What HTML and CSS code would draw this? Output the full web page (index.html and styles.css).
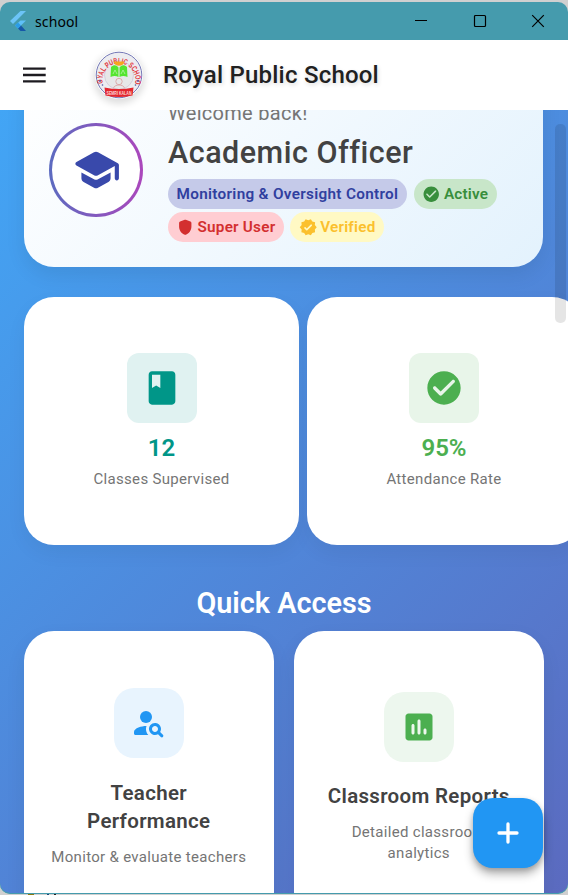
FILE: index.html
```html
<!DOCTYPE html>
<html lang="en">
<head>
<meta charset="utf-8">
<title>school</title>
<link rel="stylesheet" href="styles.css">
</head>
<body>
<div class="window">
  <header class="titlebar">
    <svg class="flutter" viewBox="0 0 18 22"><path fill="#6cc4f7" d="M11.500 1h5.500L4 14 1 11z"/><path fill="#5fc0f8" d="M11.500 10.500H17L12 15.500 9 18.500 6 15.500z"/><path fill="#1657a8" d="M9 18.500l3-3 5 5.500h-5.500z"/><path fill="#2b9de8" d="M6 15.500l3-3 3 3-3 3z"/></svg>
    <span class="app-name">school</span>
    <div class="controls">
      <svg viewBox="0 0 14 14"><path d="M1 6.500h12"/></svg>
      <svg viewBox="0 0 14 14"><rect x="1.500" y="1.500" width="11" height="11" rx="1"/></svg>
      <svg viewBox="0 0 14 14"><path d="M1.200 1.200l11.600 11.600M12.800 1.200L1.200 12.800"/></svg>
    </div>
  </header>

  <nav class="appbar">
    <svg class="menu" viewBox="0 0 24 16"><path d="M0 1.600h22.700M0 8h22.700M0 14.400h22.700"/></svg>
    <div class="crest">
      <svg viewBox="0 0 48 48">
        <defs><path id="arc" d="M8 32.500A16.400 16.400 0 1 1 40 32.500"/></defs>
        <circle cx="24" cy="24" r="22.800" fill="#ececf0" stroke="#7377b5" stroke-width="1"/>
        <circle cx="24" cy="24" r="14.500" fill="#e7e7e8" stroke="#c3b7cd" stroke-width=".5"/>
        <text class="crest-name"><textPath href="#arc" startOffset="50%" text-anchor="middle" textLength="66" lengthAdjust="spacingAndGlyphs">ROYAL PUBLIC SCHOOL</textPath></text>
        <path fill="#f7a51f" d="M18.500 10.500h11c-.7 2.800-2.700 4.300-5.500 4.300s-4.800-1.500-5.500-4.300z"/>
        <path fill="#55e52f" d="M16 16c3-3 6-2 7.500.5V26c-2.500-1.500-5-1.500-8 0zM32 16c-3-3-6-2-7.500.5V26c2.500-1.500 5-1.500 8 0z"/>
        <path fill="none" stroke="#b5f0a5" stroke-width=".8" d="M18 23l2-4 2 4M26 23l2-4 2 4"/>
        <circle cx="24" cy="30.500" r="3.200" fill="none" stroke="#d99c9c" stroke-width=".8"/>
        <path fill="none" stroke="#d99c9c" stroke-width=".8" d="M18.500 37c1-4 10-4 11 0"/>
        <circle cx="5" cy="30" r=".9" fill="#4a50a5"/><circle cx="43" cy="30" r=".9" fill="#4a50a5"/><circle cx="7.500" cy="34" r=".8" fill="#4a50a5"/><circle cx="40.500" cy="34" r=".8" fill="#4a50a5"/>
        <path fill="#e3262e" d="M9.500 36.500q14.500 3 29 0l-1 8q-13.500 3-27 0z"/>
        <text class="crest-place" x="24" y="43.500" text-anchor="middle" textLength="25" lengthAdjust="spacingAndGlyphs">SEMRI KALAN</text>
      </svg>
    </div>
    <h1 class="school-name">Royal Public School</h1>
  </nav>

  <main class="page">
    <section class="hero">
      <div class="avatar">
        <div class="avatar-inner"><svg viewBox="0 0 24 24"><path d="M5 13.180v2.810c0 .73.4 1.410 1.040 1.760l5 2.730c.6.33 1.320.33 1.920 0l5-2.730c.64-.35 1.040-1.030 1.040-1.760v-2.810l-6.040 3.300c-.6.33-1.320.33-1.920 0L5 13.180zm6.040-9.660l-8.430 4.600c-.69.38-.69 1.380 0 1.760l8.430 4.600c.6.33 1.320.33 1.920 0L21 10.090V16c0 .55.45 1 1 1s1-.45 1-1V9.590c0-.37-.2-.7-.52-.88l-9.520-5.190c-.6-.32-1.320-.32-1.920 0z"/></svg></div>
      </div>
      <div class="hero-info">
        <p class="welcome">Welcome back!</p>
        <h2 class="role">Academic Officer</h2>
        <div class="badges">
          <span class="badge indigo">Monitoring &amp; Oversight Control</span>
          <span class="badge green"><svg viewBox="0 0 24 24"><path d="M12 2C6.480 2 2 6.480 2 12s4.480 10 10 10 10-4.480 10-10S17.520 2 12 2zM9.290 16.290L5.700 12.700c-.39-.39-.39-1.020 0-1.410s1.020-.39 1.410 0L10 14.170l6.880-6.880c.39-.39 1.020-.39 1.410 0s.39 1.020 0 1.410l-7.590 7.590c-.38.39-1.020.39-1.410 0z"/></svg>Active</span>
          <span class="badge red"><svg viewBox="0 0 24 24"><path d="M11.300 2.260l-6 2.250C4.520 4.810 4 5.550 4 6.390v4.700c0 4.830 3.130 9.370 7.430 10.750.36.12.78.12 1.140 0C16.870 20.460 20 15.920 20 11.090v-4.700c0-.83-.52-1.580-1.300-1.870l-6-2.250c-.45-.18-.95-.18-1.400-.01z"/></svg>Super User</span>
          <span class="badge yellow"><svg viewBox="0 0 24 24"><path d="M23 12l-2.440-2.790.34-3.690-3.610-.82-1.890-3.200L12 2.960 8.600 1.500 6.710 4.690 3.100 5.500l.34 3.700L1 12l2.440 2.790-.34 3.700 3.610.82L8.600 22.500l3.400-1.470 3.400 1.460 1.890-3.190 3.610-.82-.34-3.690L23 12zM9.380 16.010L7 13.610c-.39-.39-.39-1.020 0-1.410l.07-.07c.39-.39 1.030-.39 1.420 0l1.610 1.620 5.150-5.160c.39-.39 1.030-.39 1.420 0l.07.07c.39.39.39 1.020 0 1.410l-5.920 5.940c-.41.39-1.040.39-1.440 0z"/></svg>Verified</span>
        </div>
      </div>
    </section>

    <section class="stats">
      <article class="stat teal">
        <div class="tile"><svg viewBox="0 0 24 24"><path d="M18 2H6c-1.100 0-2 .9-2 2v16c0 1.100.9 2 2 2h12c1.100 0 2-.9 2-2V4c0-1.100-.9-2-2-2zM6 4h5v8l-2.500-1.500L6 12V4z"/></svg></div>
        <strong>12</strong>
        <p>Classes Supervised</p>
      </article>
      <article class="stat leaf">
        <div class="tile"><svg viewBox="0 0 24 24"><path d="M12 2C6.480 2 2 6.480 2 12s4.480 10 10 10 10-4.480 10-10S17.520 2 12 2zM9.290 16.290L5.700 12.700c-.39-.39-.39-1.020 0-1.410s1.020-.39 1.410 0L10 14.170l6.880-6.880c.39-.39 1.020-.39 1.410 0s.39 1.020 0 1.410l-7.590 7.590c-.38.39-1.020.39-1.410 0z"/></svg></div>
        <strong>95%</strong>
        <p>Attendance Rate</p>
      </article>
    </section>

    <h2 class="section-title">Quick Access</h2>

    <section class="quick">
      <article class="link-card blue">
        <div class="tile"><svg viewBox="0 0 24 24"><circle cx="10" cy="8" r="4"/><path d="M10.350 14.010C7.620 13.910 2 15.270 2 18v1c0 .55.45 1 1 1h8.540c-2.470-2.760-1.230-5.890-1.190-5.990zM19.430 18.020c.47-.8.7-1.770.48-2.820-.34-1.640-1.720-2.950-3.380-3.160-2.630-.34-4.850 1.870-4.500 4.500.22 1.660 1.520 3.040 3.160 3.380 1.050.22 2.020-.01 2.820-.48l1.860 1.860c.39.39 1.020.39 1.410 0s.39-1.020 0-1.410l-1.850-1.870zM16 18c-1.100 0-2-.9-2-2s.9-2 2-2 2 .9 2 2-.9 2-2 2z"/></svg></div>
        <h3>Teacher<br>Performance</h3>
        <p>Monitor &amp; evaluate teachers</p>
      </article>
      <article class="link-card leaf">
        <div class="tile"><svg viewBox="0 0 24 24"><path d="M19 3H5c-1.100 0-2 .9-2 2v14c0 1.100.9 2 2 2h14c1.100 0 2-.9 2-2V5c0-1.100-.9-2-2-2zM8 17c-.55 0-1-.45-1-1v-5c0-.55.45-1 1-1s1 .45 1 1v5c0 .55-.45 1-1 1zm4 0c-.55 0-1-.45-1-1V8c0-.55.45-1 1-1s1 .45 1 1v8c0 .55-.45 1-1 1zm4 0c-.55 0-1-.45-1-1v-2c0-.55.45-1 1-1s1 .45 1 1v2c0 .55-.45 1-1 1z"/></svg></div>
        <h3>Classroom Reports</h3>
        <p>Detailed classroom<br>analytics</p>
      </article>
    </section>

    <div class="scroll-thumb"></div>
    <button class="fab" aria-label="Add"><svg viewBox="0 0 30 30"><path d="M15 6v18M6 15h18"/></svg></button>
  </main>
</div>
<div class="desktop-edge"></div>
</body>
</html>
```

FILE: styles.css
```css
* { box-sizing: border-box; margin: 0; padding: 0; }
body {
  width: 568px;
  height: 895px;
  padding-top: 2px;
  overflow: hidden;
  background: #d0d0d0;
  font-family: Roboto, "Liberation Sans", sans-serif;
}
.window {
  height: 892px;
  display: flex;
  flex-direction: column;
  overflow: hidden;
  border-radius: 10px;
  background: #459bad;
  border-bottom: 1px solid #459bad;
}
/* Sliver of the desktop below the window */
.desktop-edge {
  height: 1px;
  background: linear-gradient(90deg, transparent 28px, #8a7a10 28px 34px, transparent 34px 47px, #1c4a78 47px 49px, transparent 49px 54px, #222 54px 56px, transparent 56px);
}

/* Window title bar */
.titlebar { height: 38px; flex: none; display: flex; align-items: center; padding-left: 9px; }
.flutter { width: 18px; height: 22px; }
.app-name { margin-left: 8px; font: 14px/20px "Noto Sans", sans-serif; letter-spacing: .1px; padding-top: 2px; color: #000; }
.controls { margin-left: auto; display: flex; gap: 44.500px; padding-right: 23px; }
.controls svg { width: 14px; height: 14px; fill: none; stroke: #000; stroke-width: 1.2; }

/* App bar */
.appbar { height: 70px; flex: none; display: flex; align-items: center; padding-left: 23px; background: #fff; }
.menu { width: 24px; height: 16px; stroke: #1d1b20; stroke-width: 2.3; }
.crest { width: 48px; height: 48px; margin-left: 48px; border-radius: 50%; box-shadow: 0 3px 7px 2px rgba(0, 0, 0, .13); }
.crest svg { display: block; width: 48px; height: 48px; }
.crest-name { font: 700 8px "Liberation Sans", sans-serif; fill: #e33841; }
.crest-place { font: 700 5px "Liberation Sans", sans-serif; fill: #fbd5d5; }
.school-name {
  margin-left: 20px;
  font-size: 24px;
  font-weight: 500;
  line-height: 30px;
  letter-spacing: .22px;
  color: #212121;
  text-shadow: 1px 2px 4px rgba(0, 0, 0, .14);
}

/* Scrolled page body */
.page {
  position: relative;
  height: 783px;
  flex: none;
  padding: 0 24px;
  overflow: hidden;
  border-radius: 0 0 10px 10px;
  background: linear-gradient(135deg, #42a5f5, #5c6bc0);
}
.hero {
  display: flex;
  align-items: center;
  width: 519px;
  height: 194px;
  margin-top: -37px;
  padding: 0 25px;
  border-radius: 30px;
  background: linear-gradient(135deg, #fff, #e3f2fd);
  box-shadow: 0 8px 20px rgba(0, 0, 0, .08);
}
.avatar {
  width: 94px;
  height: 94px;
  padding: 3px;
  border-radius: 50%;
  background: linear-gradient(90deg, #5c6bc0, #ab47bc);
}
.avatar-inner { display: grid; place-items: center; height: 100%; border-radius: 50%; background: #fff; }
.avatar svg { width: 50px; height: 50px; fill: #3949ab; }
.hero-info { flex: 1; margin: 3px 0 0 25px; }
.welcome { font-size: 20px; line-height: 24px; letter-spacing: .3px; color: #757575; }
.role { margin-top: 8px; font-size: 30.500px; font-weight: 500; line-height: 40px; letter-spacing: .5px; color: #424242; }
.badges { display: flex; flex-wrap: wrap; gap: 3px 6.500px; margin: 6px -20px 0 -.5px; }
.badge {
  display: flex;
  align-items: center;
  gap: 3px;
  height: 30px;
  padding: 0 9px;
  border-radius: 15px;
  font-size: 15.300px;
  font-weight: 600;
  letter-spacing: .31px;
  white-space: nowrap;
}
.badge svg { width: 18.500px; height: 18.500px; margin-left: -.5px; fill: currentColor; }
.badge.green, .badge.red, .badge.yellow { padding-right: 8.300px; letter-spacing: .22px; }
.indigo { background: #c5cae9; color: #303f9f; }
.green { background: #c8e6c9; color: #388e3c; }
.red { background: #ffcdd2; color: #d32f2f; }
.yellow { background: #fff9c4; color: #fbc02d; }

/* Statistics row, runs past the right edge */
.stats { display: flex; gap: 7.500px; width: 557.500px; margin-top: 30px; }
.stat {
  display: flex;
  flex-direction: column;
  align-items: center;
  width: 275px;
  height: 248px;
  padding-top: 56px;
  border-radius: 30px;
  background: #fff;
  box-shadow: 0 8px 20px rgba(0, 0, 0, .05);
}
.tile { display: grid; place-items: center; width: 70px; height: 70px; flex: none; }
.stat .tile { border-radius: 12px; }
.stat .tile svg { width: 40px; height: 40px; fill: currentColor; }
.stat strong { margin-top: 10px; font-size: 24px; font-weight: 600; line-height: 30px; }
.stat p { margin-top: 6px; font-size: 15px; line-height: 20px; letter-spacing: .32px; color: #757575; }
.teal { color: #009688; }
.teal .tile { background: #e0f2f1; }
.leaf { color: #4caf50; }
.leaf .tile { background: #e8f5e9; }

.section-title {
  margin-top: 40px;
  font-size: 28.800px;
  font-weight: 600;
  line-height: 36px;
  text-align: center;
  color: #fff;
}

/* Quick access cards */
.quick { display: grid; grid-template-columns: 249.500px 249.500px; gap: 20.500px; margin-top: 10px; }
.link-card {
  display: flex;
  flex-direction: column;
  align-items: center;
  height: 290px;
  padding-top: 57px;
  border-radius: 30px;
  background: #fff;
  box-shadow: 0 8px 20px rgba(0, 0, 0, .07);
  text-align: center;
}
.link-card.leaf { padding-top: 61px; }
.link-card .tile { border-radius: 20px; }
.link-card .tile svg { width: 36px; height: 36px; fill: currentColor; }
.link-card h3 { margin-top: 21px; font-size: 20.500px; font-weight: 600; line-height: 28px; letter-spacing: .32px; color: #424242; }
.link-card.leaf h3 { margin-top: 20px; }
.link-card p { margin-top: 12px; font-size: 15px; line-height: 21px; letter-spacing: .31px; color: #757575; }
.blue { color: #2196f3; }
.blue .tile { background: #e8f4fe; }
.link-card.leaf .tile { background: #edf7ee; }

/* Overlays */
.scroll-thumb {
  position: absolute;
  top: 14px;
  right: 2.500px;
  width: 10.500px;
  height: 199px;
  border-radius: 5px;
  background: rgba(0, 0, 0, .1);
}
.fab {
  position: absolute;
  right: 25px;
  bottom: 25px;
  display: grid;
  place-items: center;
  width: 70px;
  height: 70px;
  border: 0;
  border-radius: 20px;
  background: #2196f3;
  box-shadow: 0 6px 10px rgba(0, 0, 0, .3), 0 2px 5px rgba(0, 0, 0, .15);
}
.fab svg { width: 30px; height: 30px; fill: none; stroke: #fff; stroke-width: 3.3; stroke-linecap: round; }
```
